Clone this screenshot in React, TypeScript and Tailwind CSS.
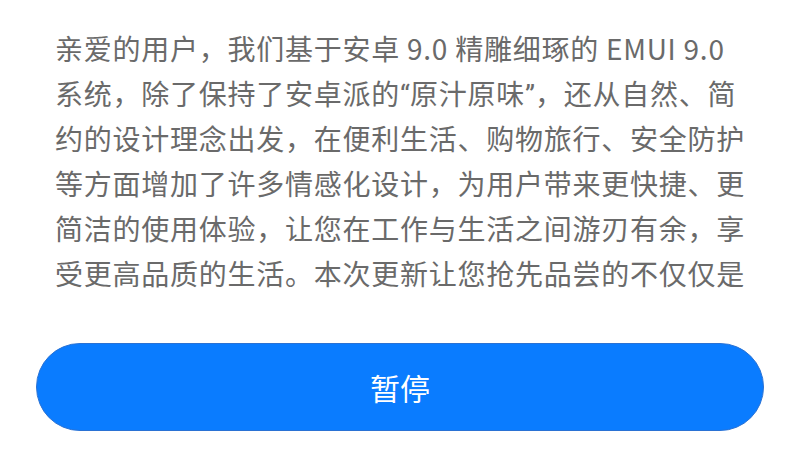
const Q = ({ children }: { children: string }) => (
  <span className="font-['Roboto',sans-serif] tracking-normal">{children}</span>
);

export default function App() {
  return (
    <div className="w-[800px] h-[467px] bg-white overflow-hidden font-['Noto_Sans_CJK_SC',sans-serif]">
      <div className="pt-[26px] pl-[55px] text-[28px] leading-[45px] tracking-[0.75px] text-[#6a6a6a] whitespace-nowrap [&>div]:h-[45px]">
        <div>亲爱的用户，我们基于安卓 9.0 精雕细琢的 EMUI 9.0</div>
        <div>
          系统，除了保持了安卓派的<Q>“</Q>原汁原味<Q>”</Q>，还从自然、简
        </div>
        <div>约的设计理念出发，在便利生活、购物旅行、安全防护</div>
        <div>等方面增加了许多情感化设计，为用户带来更快捷、更</div>
        <div>简洁的使用体验，让您在工作与生活之间游刃有余，享</div>
        <div>受更高品质的生活。本次更新让您抢先品尝的不仅仅是</div>
      </div>
      <div className="px-[36px] pt-[47px]">
        <button
          type="button"
          className="w-full h-[88px] rounded-full bg-[#0a7cff] border border-[#2a72d4] text-white text-[30px] flex items-center justify-center"
        >
          暂停
        </button>
      </div>
    </div>
  );
}
